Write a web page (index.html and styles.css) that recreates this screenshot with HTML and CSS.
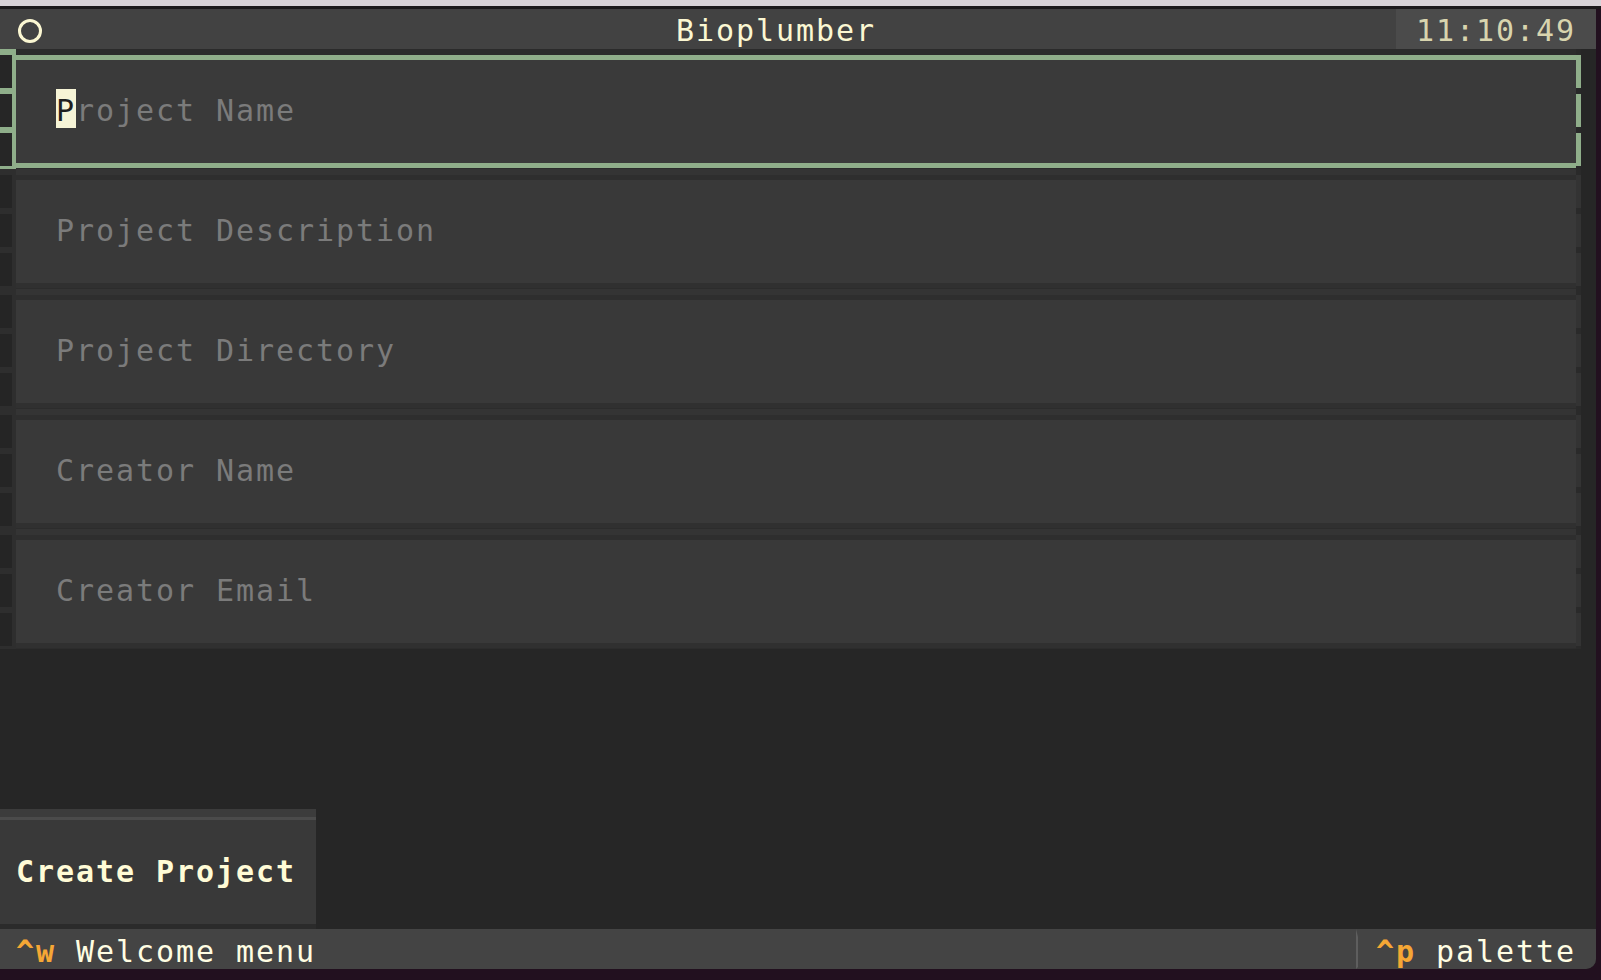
FILE: index.html
```html
<!DOCTYPE html>
<html lang="en">
<head>
<meta charset="utf-8">
<title>Bioplumber</title>
<link rel="stylesheet" href="styles.css">
</head>
<body>
<div class="chrome"></div>
<div class="term">
  <header class="hdr">
    <div class="hicon">
      <svg width="24" height="24" viewBox="0 0 24 24"><circle cx="12" cy="12" r="10.5" fill="none" stroke="#fbf7d2" stroke-width="3"/></svg>
    </div>
    <div class="htitle">Bioplumber</div>
    <div class="hclock">11:10:49</div>
  </header>
  <main class="screen">
    <div class="fields">
      <div class="field focused">
        <div class="lcol"><i></i><i></i><i></i></div>
        <div class="fbody">
          <div class="tstrip"></div><div class="tline"></div>
          <div class="inner"><div class="ph"><span class="cur">P</span>roject Name</div></div>
          <div class="bline"></div><div class="bstrip"></div>
        </div>
        <div class="rcol"><i></i><i></i><i></i></div>
      </div>
      <div class="field">
        <div class="lcol"><i></i><i></i><i></i></div>
        <div class="fbody">
          <div class="tstrip"></div><div class="tline"></div>
          <div class="inner"><div class="ph">Project Description</div></div>
          <div class="bline"></div><div class="bstrip"></div>
        </div>
        <div class="rcol"><i></i><i></i><i></i></div>
      </div>
      <div class="field">
        <div class="lcol"><i></i><i></i><i></i></div>
        <div class="fbody">
          <div class="tstrip"></div><div class="tline"></div>
          <div class="inner"><div class="ph">Project Directory</div></div>
          <div class="bline"></div><div class="bstrip"></div>
        </div>
        <div class="rcol"><i></i><i></i><i></i></div>
      </div>
      <div class="field">
        <div class="lcol"><i></i><i></i><i></i></div>
        <div class="fbody">
          <div class="tstrip"></div><div class="tline"></div>
          <div class="inner"><div class="ph">Creator Name</div></div>
          <div class="bline"></div><div class="bstrip"></div>
        </div>
        <div class="rcol"><i></i><i></i><i></i></div>
      </div>
      <div class="field">
        <div class="lcol"><i></i><i></i><i></i></div>
        <div class="fbody">
          <div class="tstrip"></div><div class="tline"></div>
          <div class="inner"><div class="ph">Creator Email</div></div>
          <div class="bline"></div><div class="bstrip"></div>
        </div>
        <div class="rcol"><i></i><i></i><i></i></div>
      </div>
    </div>
    <div class="spacer"></div>
    <div class="btn">
      <div class="btn-top"></div>
      <div class="btn-line"></div>
      <div class="btn-body"><div class="btn-label">Create Project</div></div>
      <div class="btn-bot"></div>
    </div>
  </main>
  <footer class="ftr">
    <div class="fl"><b class="key">^w</b> Welcome menu</div>
    <div class="fr"><span class="sep"></span><span class="frtext"><b class="key">^p</b> palette</span></div>
  </footer>
</div>
</body>
</html>
```

FILE: styles.css
```css
html, body {
  margin: 0;
  padding: 0;
}
body {
  width: 1601px;
  height: 980px;
  overflow: hidden;
  background: #22101f;
  font-family: "DejaVu Sans Mono", monospace;
  font-size: 30px;
  letter-spacing: 1.9385px;
}
.chrome {
  height: 6px;
  background: #d8d3d8;
  border-bottom: 3px solid #1c1a1c;
}
.term {
  width: 1596px;
  height: 960px;
  background: #262626;
  display: flex;
  flex-direction: column;
  border-bottom-right-radius: 10px;
  overflow: hidden;
}
/* header */
.hdr {
  height: 40px;
  flex: none;
  display: flex;
  background: #424242;
  line-height: 43px;
  color: #fbf7d2;
}
.hicon {
  width: 156px;
  flex: none;
  display: flex;
  align-items: flex-start;
  padding: 10px 0 0 18px;
  box-sizing: border-box;
}
.hicon svg { display: block; }
.htitle {
  flex: 1;
  text-align: center;
  white-space: pre;
}
.hclock {
  width: 200px;
  flex: none;
  box-sizing: border-box;
  padding-left: 20px;
  background: #4b4b4b;
  color: #d8d4ae;
  white-space: pre;
}
/* main */
.screen {
  flex: 1;
  display: flex;
  flex-direction: column;
}
.fields {
  display: flex;
  flex-direction: column;
}
.field {
  display: flex;
  width: 1581px;
  height: 120px;
}
.lcol {
  width: 16px;
  flex: none;
  background: #2e2e2e;
}
.lcol i {
  display: block;
  width: 12px;
  height: 33px;
  margin: 6px 0 1px 0;
  background: #252525;
}
.rcol {
  width: 5px;
  flex: none;
  background: #2a2a2a;
}
.rcol i {
  display: block;
  height: 33px;
  margin: 6px 0 1px 0;
  background: #333333;
}
.fbody {
  flex: 1;
  display: flex;
  flex-direction: column;
}
.tstrip { height: 6px; background: #343434; }
.tline { height: 5px; background: #2e2e2e; }
.bline { height: 5px; background: #303030; }
.bstrip { height: 1px; background: #2c2c2c; }
.inner {
  flex: 1;
  background: #393939;
  padding-top: 29px;
  box-sizing: border-box;
}
.ph {
  height: 40px;
  line-height: 44px;
  padding-left: 40px;
  color: #7b7b7b;
  white-space: pre;
}
.cur {
  display: inline-block;
  vertical-align: top;
  height: 39px;
  line-height: 44px;
  overflow: hidden;
  background: #f6f4d6;
  color: #1f1f1f;
}
.field.focused .lcol { background: #8fae8a; }
.field.focused .lcol i { background: #262626; }
.field.focused .rcol { background: #282828; }
.field.focused .rcol i { background: #8fae8a; }
.field.focused .tstrip { background: #2b2b2b; }
.field.focused .tline,
.field.focused .bline { background: #8fae8a; }
.field.focused .bstrip { background: #2b2b2b; }
.field.focused .inner { background: #3a3a3a; }

.spacer { flex: 1; }

/* button */
.btn {
  width: 316px;
  height: 120px;
  flex: none;
  display: flex;
  flex-direction: column;
  background: #393939;
}
.btn-top { height: 8px; background: #3c3c3c; }
.btn-line { height: 3px; background: #4b4b4b; }
.btn-body {
  flex: 1;
  padding-top: 29px;
  box-sizing: border-box;
}
.btn-label {
  height: 40px;
  line-height: 45px;
  padding-left: 16px;
  font-weight: bold;
  color: #fffbd6;
  white-space: pre;
}
.btn-bot { height: 5px; background: #2b2b2b; }

/* footer */
.ftr {
  height: 40px;
  flex: none;
  display: flex;
  justify-content: space-between;
  background: #444444;
  line-height: 45px;
  color: #fffde2;
}
.fl {
  padding-left: 16px;
  white-space: pre;
}
.fr {
  display: flex;
  padding-right: 20px;
}
.frtext { white-space: pre; }
.key {
  color: #f5a735;
  font-weight: bold;
}
.sep {
  width: 20px;
  height: 40px;
  flex: none;
  box-sizing: border-box;
  border-left: 2px solid #5e5e5e;
  border-top: 8px solid #444444;
  border-bottom: 2px solid #444444;
}
```
